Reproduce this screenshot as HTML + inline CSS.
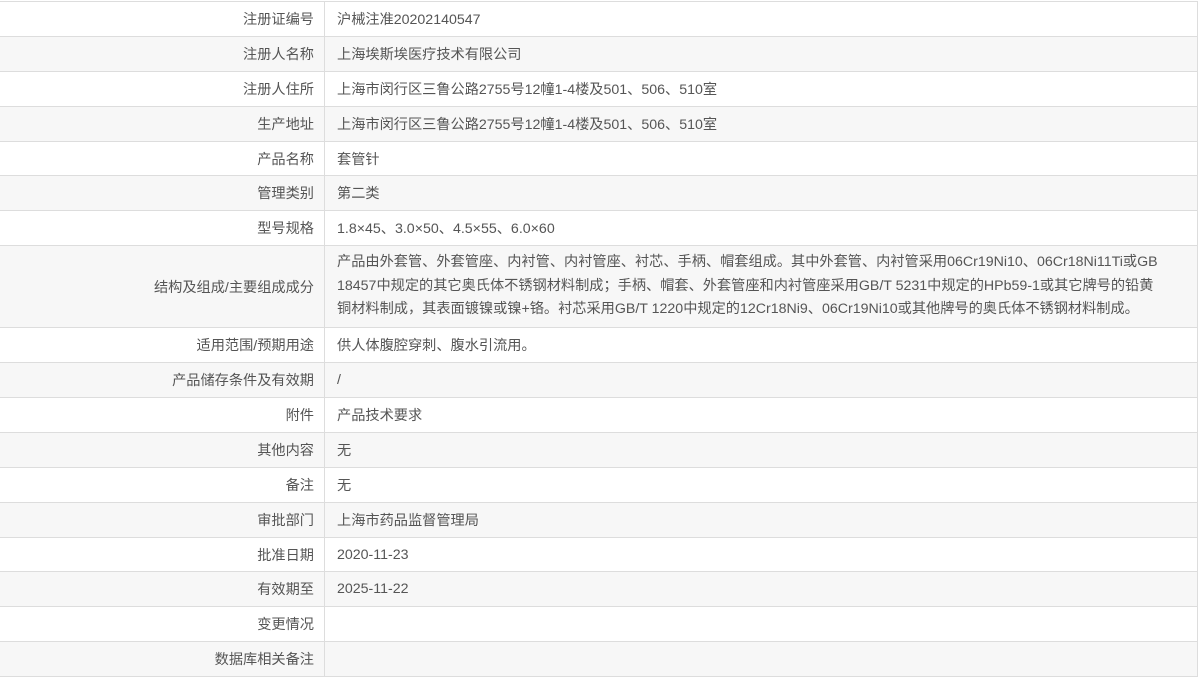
<!DOCTYPE html>
<html><head><meta charset="utf-8"><style>
html,body{margin:0;padding:0;background:#fff;width:1200px;height:681px;overflow:hidden}
body{font-family:"Liberation Sans","Noto Sans CJK SC",sans-serif;font-size:14.2px;color:#555}
.t{position:absolute;left:0;top:1px;width:1197px;border-top:1px solid #ddd;border-right:1px solid #ddd}
.r{display:flex;height:34.9px;box-sizing:border-box;border-bottom:1px solid #ddd}
.r:nth-child(even){background:#f7f7f7}
.l{width:325px;box-sizing:border-box;border-right:1px solid #ddd;text-align:right;padding-right:10px;display:flex;align-items:center;justify-content:flex-end}
.v{flex:1;padding-left:12px;display:flex;align-items:center;white-space:nowrap}
.tall{height:82px}
.tall .v{line-height:23.5px;white-space:nowrap}
</style></head><body>
<div class="t">
<div class="r"><div class="l">注册证编号</div><div class="v">沪械注准20202140547</div></div>
<div class="r"><div class="l">注册人名称</div><div class="v">上海埃斯埃医疗技术有限公司</div></div>
<div class="r"><div class="l">注册人住所</div><div class="v">上海市闵行区三鲁公路2755号12幢1-4楼及501、506、510室</div></div>
<div class="r"><div class="l">生产地址</div><div class="v">上海市闵行区三鲁公路2755号12幢1-4楼及501、506、510室</div></div>
<div class="r"><div class="l">产品名称</div><div class="v">套管针</div></div>
<div class="r"><div class="l">管理类别</div><div class="v">第二类</div></div>
<div class="r"><div class="l">型号规格</div><div class="v">1.8×45、3.0×50、4.5×55、6.0×60</div></div>
<div class="r tall"><div class="l">结构及组成/主要组成成分</div><div class="v"><div>产品由外套管、外套管座、内衬管、内衬管座、衬芯、手柄、帽套组成。其中外套管、内衬管采用06Cr19Ni10、06Cr18Ni11Ti或GB<br>18457中规定的其它奥氏体不锈钢材料制成；手柄、帽套、外套管座和内衬管座采用GB/T 5231中规定的HPb59-1或其它牌号的铅黄<br>铜材料制成，其表面镀镍或镍+铬。衬芯采用GB/T 1220中规定的12Cr18Ni9、06Cr19Ni10或其他牌号的奥氏体不锈钢材料制成。</div></div></div>
<div class="r"><div class="l">适用范围/预期用途</div><div class="v">供人体腹腔穿刺、腹水引流用。</div></div>
<div class="r"><div class="l">产品储存条件及有效期</div><div class="v">/</div></div>
<div class="r"><div class="l">附件</div><div class="v">产品技术要求</div></div>
<div class="r"><div class="l">其他内容</div><div class="v">无</div></div>
<div class="r"><div class="l">备注</div><div class="v">无</div></div>
<div class="r"><div class="l">审批部门</div><div class="v">上海市药品监督管理局</div></div>
<div class="r"><div class="l">批准日期</div><div class="v">2020-11-23</div></div>
<div class="r"><div class="l">有效期至</div><div class="v">2025-11-22</div></div>
<div class="r"><div class="l">变更情况</div><div class="v"></div></div>
<div class="r"><div class="l">数据库相关备注</div><div class="v"></div></div>
</div>
</body></html>
